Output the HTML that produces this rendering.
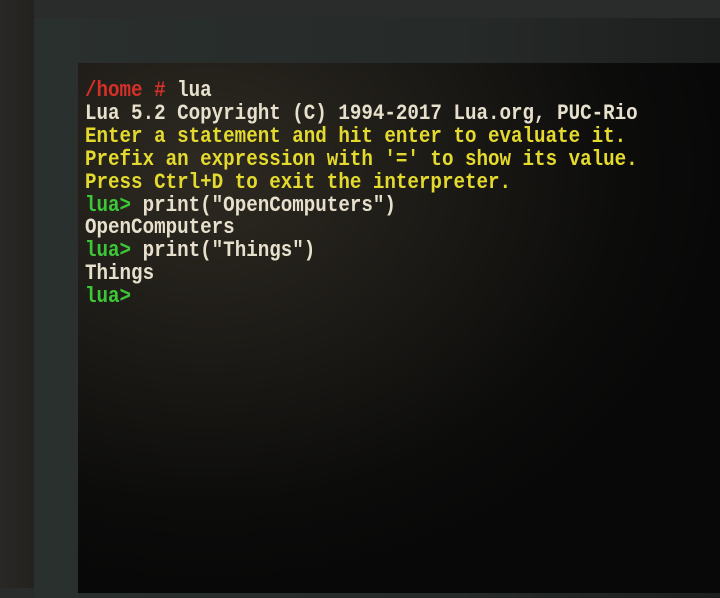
<!DOCTYPE html>
<html><head><style>
html,body{margin:0;padding:0}
body{width:720px;height:588px;overflow:hidden;position:relative;background:linear-gradient(180deg,#2a2c2b 0%,#1f2220 100%);}
#bezel{position:absolute;left:34px;top:18px;width:700px;height:580px;background:linear-gradient(90deg,#2a302e,#262a28 60%,#1c1e1d);}
#screen{position:absolute;left:78px;top:63px;width:650px;height:530px;
background:radial-gradient(ellipse 520px 420px at 20% 20%,#2e2a22 0%,#1c1a16 45%,#0c0c0b 80%,#080808 100%);}
#lside{position:absolute;left:0;top:0;width:34px;height:588px;background:linear-gradient(90deg,#2a2826,#23221f);}
pre{position:absolute;left:85px;top:80px;margin:0;font-family:"Liberation Mono","DejaVu Sans Mono",monospace;font-weight:bold;font-size:19.2px;line-height:19.9px;color:#e6e0cc;transform:scaleY(1.15);transform-origin:0 0;}
.r{color:#d52f28}.y{color:#e4da2e}.g{color:#3cc836}
</style></head><body>
<div id="lside"></div>
<div id="bezel"></div>
<div id="screen"></div>
<pre><span class="r">/home #</span> lua
Lua 5.2 Copyright (C) 1994-2017 Lua.org, PUC-Rio
<span class="y">Enter a statement and hit enter to evaluate it.
Prefix an expression with '=' to show its value.
Press Ctrl+D to exit the interpreter.</span>
<span class="g">lua&gt;</span> print("OpenComputers")
OpenComputers
<span class="g">lua&gt;</span> print("Things")
Things
<span class="g">lua&gt;</span></pre>
</body></html>
